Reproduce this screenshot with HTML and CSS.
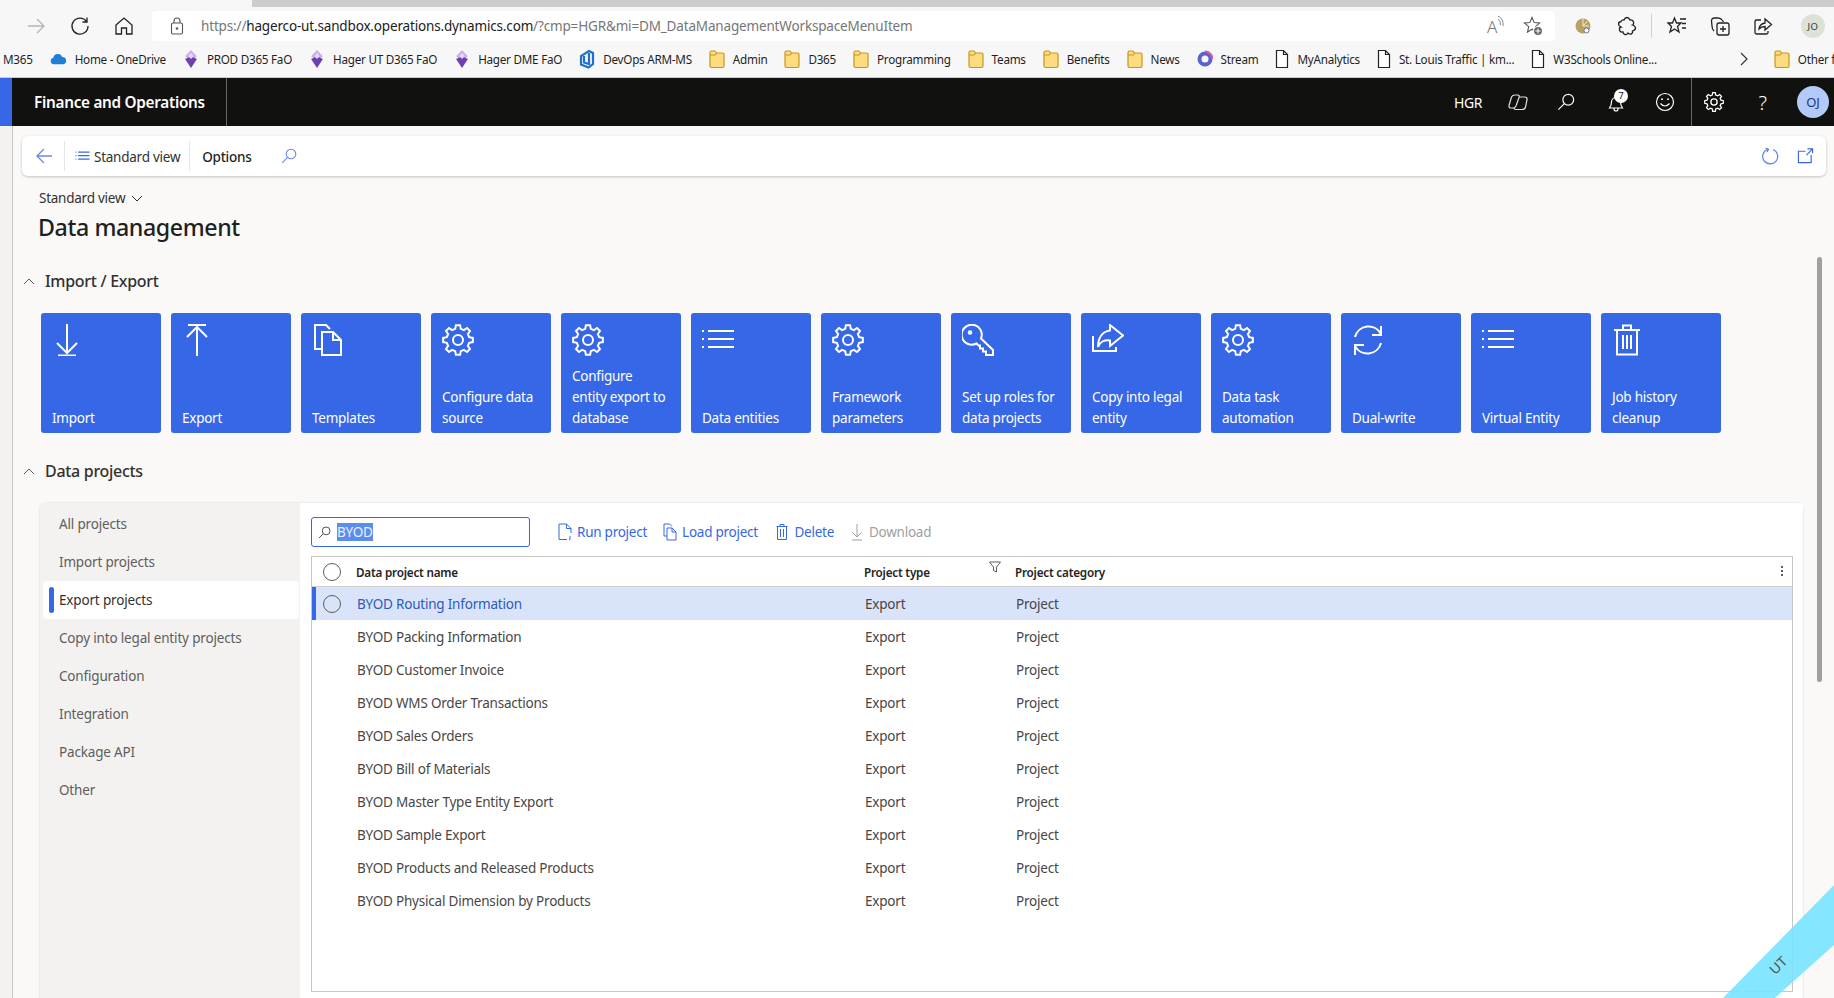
FILE: index.html
```html
<!DOCTYPE html>
<html lang="en">
<head>
<meta charset="utf-8">
<title>Data management</title>
<link rel="stylesheet" href="styles.css">
</head>
<body>
<svg class="defs" width="0" height="0">
  <symbol id="gear" viewBox="0 0 32 32"><path d="M13.22 4.84L13.91 1.15H18.09L18.78 4.84L21.92 6.14L25.03 4.02L27.98 6.97L25.86 10.08L27.16 13.22L30.85 13.91V18.09L27.16 18.78L25.86 21.92L27.98 25.03L25.03 27.98L21.92 25.86L18.78 27.16L18.09 30.85H13.91L13.22 27.16L10.08 25.86L6.97 27.98L4.02 25.03L6.14 21.92L4.84 18.78L1.15 18.09V13.91L4.84 13.22L6.14 10.08L4.02 6.97L6.97 4.02L10.08 6.14Z"/><circle cx="16" cy="16" r="5"/></symbol>
  <symbol id="list" viewBox="0 0 32 32"><path d="M6 7H32M6 15H32M6 23H32M0 7H2M0 15H2M0 23H2" /></symbol>
  <symbol id="folder" viewBox="0 0 16 20"><path d="M1 3.5a1.5 1.5 0 0 1 1.5-1.5H6l1.5 2H13.5A1.5 1.5 0 0 1 15 5.500V17a1.500 1.500 0 0 1-1.500 1.500H2.500A1.500 1.500 0 0 1 1 17Z" fill="#fcdc7e" stroke="#c8971b" stroke-width="1.200"/><path d="M1 6H6.500L7.500 4" fill="none" stroke="#c8971b" stroke-width="1"/></symbol>
  <symbol id="doc" viewBox="0 0 14 20"><path d="M1.500 1.500H8.500L12.500 5.500V18.500H1.500Z M8.500 1.500V5.500H12.500" fill="#fff" stroke="#222" stroke-width="1.200"/></symbol>
  <symbol id="gem" viewBox="0 0 16 22"><path d="M8 1L14.500 8L8 13L1.500 8Z" fill="#c9aff0"/><path d="M8 8L14.500 11L8 21L1.500 11Z" fill="#6d3fb0"/><path d="M8 4L11 8L8 11L5 8Z" fill="#e5d8fa"/></symbol>
  <symbol id="mag" viewBox="0 0 20 20"><circle cx="12.500" cy="7.500" r="6"/><path d="M8.200 11.800L1.500 18.500"/></symbol>
</svg>

<div class="tabstrip"><div class="tab"></div><div class="tabrest"></div></div>

<div class="toolbar">
  <svg class="tb-ic tb-fwd" viewBox="0 0 20 20"><path d="M2 10H18M11 3L18 10L11 17"/></svg>
  <svg class="tb-ic tb-reload" viewBox="0 0 20 20"><path d="M16.500 5.500A8 8 0 1 0 18 10M17 1.500V6H12.500"/></svg>
  <svg class="tb-ic tb-home" viewBox="0 0 20 20"><path d="M2 9L10 2L18 9V18H12.500V12H7.500V18H2Z"/></svg>
  <div class="address">
    <svg class="ad-lock" viewBox="0 0 14 20"><rect x="1.500" y="7" width="11" height="11" rx="1.500"/><path d="M4 7V5A3 3 0 0 1 10 5V7"/><circle cx="7" cy="12.500" r=".8"/></svg>
    <span class="url"><span class="url-dim">https://</span>hagerco-ut.sandbox.operations.dynamics.com<span class="url-dim">/?cmp=HGR&amp;mi=DM_DataManagementWorkspaceMenuItem</span></span>
    <span class="read-aloud">A<svg viewBox="0 0 8 12"><path d="M1 1Q7 4 6 11M1 4Q4 6 3.500 10"/></svg></span>
    <svg class="ad-star" viewBox="0 0 20 20"><path d="M9 1.500L11.200 6.600L16.500 7L12.500 10.600L13.500 16L9 13.200L4.500 16L5.700 10.600L1.500 7L6.800 6.600Z"/><circle cx="15" cy="15" r="4.500" class="ad-plus"/><path class="ad-plus-mark" d="M15 12.500V17.500M12.500 15H17.500"/></svg>
  </div>
  <div class="tb-right">
    <svg class="tb-edge" viewBox="0 0 16 20"><circle cx="8" cy="10" r="7.500" fill="#b7a262"/><path d="M8 10V3M8 10L12.500 5M8 10H14" stroke="#f2ecd6" fill="none"/><circle cx="11.500" cy="14.500" r="2.500" fill="#fff" stroke="#777"/></svg>
    <svg class="tb-ic tb-puzzle" viewBox="0 0 20 20"><path d="M7 4Q8 1.500 10 1.500T13 4Q16 3.500 16.500 6T15.500 9Q18.500 10 18.500 12T15.500 15Q16 17.500 14 18T11 17Q10 19 8 18.500T6 16Q3 16.500 2.500 14T4 11Q1.500 10 1.500 8T4 5.500Q5 3.500 7 4Z"/></svg>
    <span class="tb-sep"></span>
    <svg class="tb-ic tb-fav" viewBox="0 0 20 20"><path d="M7.500 2L9.500 7H14L10.500 10.500L12 16L7.500 13L3 16L4.500 10.500L1 7H5.500ZM13 3H19M15 7.500H19M15 12H19"/></svg>
    <svg class="tb-ic tb-coll" viewBox="0 0 20 20"><rect x="7" y="7" width="12" height="12" rx="2"/><path d="M13 10V16M10 13H16M4 15Q2 13 2 10L1.500 5Q1.500 2 4.500 2H8Q11 2 12.500 4.500L13.500 6"/></svg>
    <svg class="tb-ic tb-share" viewBox="0 0 20 20"><path d="M8 4H3.500A1.500 1.500 0 0 0 2 5.500V16.500A1.500 1.500 0 0 0 3.500 18H13.500A1.500 1.500 0 0 0 15 16.500V15M6 13Q6.500 8 12 7V3L18.500 8.500L12 14V10.500Q8.500 10.500 6 13Z"/></svg>
    <span class="tb-avatar">JO</span>
  </div>
</div>

<div class="bookmarks">
  <span class="bm bm-cut">M365</span>
  <span class="bm"><svg class="bm-cloud" viewBox="0 0 18 12"><path d="M4 11.500A3.500 3.500 0 0 1 3.500 4.600A5 5 0 0 1 13 3.800A3.900 3.900 0 0 1 14 11.500Z" fill="#1f7fd6"/></svg>Home - OneDrive</span>
  <span class="bm"><svg class="bm-i" viewBox="0 0 16 22"><use href="#gem"/></svg>PROD D365 FaO</span>
  <span class="bm"><svg class="bm-i" viewBox="0 0 16 22"><use href="#gem"/></svg>Hager UT D365 FaO</span>
  <span class="bm"><svg class="bm-i" viewBox="0 0 16 22"><use href="#gem"/></svg>Hager DME FaO</span>
  <span class="bm"><svg class="bm-i" viewBox="0 0 16 18"><path d="M14 3V14L9.500 17.500L2 14.500V6L10 1Z M5 6V12.500L10 14V3" fill="none" stroke="#1f6fd0" stroke-width="2.200"/></svg>DevOps ARM-MS</span>
  <span class="bm"><svg class="bm-i"><use href="#folder"/></svg>Admin</span>
  <span class="bm"><svg class="bm-i"><use href="#folder"/></svg>D365</span>
  <span class="bm"><svg class="bm-i"><use href="#folder"/></svg>Programming</span>
  <span class="bm"><svg class="bm-i"><use href="#folder"/></svg>Teams</span>
  <span class="bm"><svg class="bm-i"><use href="#folder"/></svg>Benefits</span>
  <span class="bm"><svg class="bm-i"><use href="#folder"/></svg>News</span>
  <span class="bm"><svg class="bm-i" viewBox="0 0 16 16"><circle cx="8" cy="8" r="5.500" fill="none" stroke="#5b63d3" stroke-width="4"/><path d="M8 .5A7.500 7.500 0 0 1 15.500 8" fill="none" stroke="#e0589b" stroke-width="2"/></svg>Stream</span>
  <span class="bm"><svg class="bm-d"><use href="#doc"/></svg>MyAnalytics</span>
  <span class="bm"><svg class="bm-d"><use href="#doc"/></svg>St. Louis Traffic | km...</span>
  <span class="bm"><svg class="bm-d"><use href="#doc"/></svg>W3Schools Online...</span>
  <svg class="bm-more" viewBox="0 0 8 14"><path d="M1 1L7 7L1 13"/></svg>
  <span class="bm-sep"></span>
  <span class="bm bm-other"><svg class="bm-i"><use href="#folder"/></svg>Other favorites</span>
</div>

<header class="appbar">
  <div class="appbar-brand"><span>Finance and Operations</span></div>
  <div class="appbar-tools">
    <span class="company">HGR</span>
    <svg class="ab-ic ab-dyn" viewBox="0 0 20 20"><path d="M3.500 5Q4.500 3 7 3H9.500Q12 3 11 5.500L8 14Q7 16 5 16H3Q.5 16 1 13.500Z"/><path d="M11 5H16.500Q19.500 5 19 8L17.500 15Q17 17.500 14 17.500H8Q6 17.500 6 16"/></svg>
    <svg class="ab-ic ab-mag"><use href="#mag"/></svg>
    <span class="ab-bell">
      <svg class="ab-ic" viewBox="0 0 20 20"><path d="M2.500 16Q4.500 13 4.500 10A4.500 4.500 0 0 1 13.500 10Q13.500 13 15.500 16ZM7 16V17A2 2 0 0 0 11 17V16"/></svg>
      <b class="ab-badge">7</b>
    </span>
    <svg class="ab-ic ab-smile" viewBox="0 0 20 20"><circle cx="10" cy="10" r="8.500"/><path d="M5.500 11.500Q10 16.500 14.500 11.500"/><path class="ab-eyes" d="M7 6.500V8M13 6.500V8"/></svg>
    <span class="ab-sep"></span>
    <svg class="ab-ic ab-gear"><use href="#gear"/></svg>
    <span class="ab-help">?</span>
    <span class="ab-avatar">OJ</span>
  </div>
</header>

<div class="app">
  <div class="railstrip"></div>
  <main class="main">
    <div class="cmdbar">
      <svg class="cb-back" viewBox="0 0 18 18"><path d="M17 9H2M9 2L2 9L9 16"/></svg>
      <span class="cb-sep cb-sep1"></span>
      <svg class="cb-list"><use href="#list"/></svg>
      <span class="cb-view">Standard view</span>
      <span class="cb-sep cb-sep2"></span>
      <span class="cb-options">Options</span>
      <svg class="cb-mag"><use href="#mag"/></svg>
      <span class="cb-spacer"></span>
      <svg class="cb-refresh" viewBox="0 0 18 18"><path d="M7 2.300A7.500 7.500 0 1 0 12 2.500M4.500 1L7.500 2.300L6 5"/></svg>
      <svg class="cb-open" viewBox="0 0 18 18"><path d="M9 4H1.500V16H15V8M11 1.500H16.500V6M16.500 1.500L10 8"/></svg>
    </div>

    <div class="pagehead">
      <div class="viewname">Standard view <svg class="chev-d" viewBox="0 0 12 7"><path d="M1 1L6 6L11 1"/></svg></div>
      <h1 class="title">Data management</h1>
    </div>

    <h2 class="section s-import"><svg class="chev-u" viewBox="0 0 12 7"><path d="M1 6L6 1L11 6"/></svg>Import / Export</h2>

    <div class="tiles">
      <a class="tile"><svg class="t-ic" viewBox="0 0 32 32"><path d="M15 0V28M5 19L15 29L25 19M6 31.500H24"/></svg><span>Import</span></a>
      <a class="tile"><svg class="t-ic" viewBox="0 0 32 32"><path d="M15 32V4M5 13L15 3L25 13M6 1H24"/></svg><span>Export</span></a>
      <a class="tile"><svg class="t-ic" viewBox="0 0 32 32"><path d="M10 25H3V1H14L18 5M18 1"/><path d="M10 8H21L29 16V31H10Z M21 8V16H29"/></svg><span>Templates</span></a>
      <a class="tile"><svg class="t-ic"><use href="#gear"/></svg><span>Configure data source</span></a>
      <a class="tile"><svg class="t-ic"><use href="#gear"/></svg><span>Configure entity export to database</span></a>
      <a class="tile"><svg class="t-ic"><use href="#list"/></svg><span>Data entities</span></a>
      <a class="tile"><svg class="t-ic"><use href="#gear"/></svg><span>Framework parameters</span></a>
      <a class="tile"><svg class="t-ic" viewBox="0 0 32 32"><path d="M14.500 19.500A10 10 0 1 1 19 14.500L31 26V31H24V27.500H21V24.500H18V21.500H16.500Z"/><circle cx="8" cy="8.500" r="1.300"/></svg><span>Set up roles for data projects</span></a>
      <a class="tile"><svg class="t-ic" viewBox="0 0 32 32"><path d="M1 12V27H24V23"/><path d="M18 1L31 11.500L18 22V16.500C13 15.500 8 17.500 6 23C6 13 11 7.500 18 6.500Z"/></svg><span>Copy into legal entity</span></a>
      <a class="tile"><svg class="t-ic"><use href="#gear"/></svg><span>Data task automation</span></a>
      <a class="tile"><svg class="t-ic" viewBox="0 0 32 32"><path d="M3 13A14 14 0 0 1 29 10M29 2V11H20M29 19A14 14 0 0 1 3 22M3 31V21H12"/></svg><span>Dual-write</span></a>
      <a class="tile"><svg class="t-ic"><use href="#list"/></svg><span>Virtual Entity</span></a>
      <a class="tile"><svg class="t-ic" viewBox="0 0 32 32"><path d="M2 6H28M11 6V1.500H19V6M5 6V30.500H25V6M11 11V25M15 11V25M19 11V25"/></svg><span>Job history cleanup</span></a>
    </div>

    <h2 class="section s-projects"><svg class="chev-u" viewBox="0 0 12 7"><path d="M1 6L6 1L11 6"/></svg>Data projects</h2>

    <section class="panel">
      <nav class="sidenav">
        <a class="nav-item">All projects</a>
        <a class="nav-item">Import projects</a>
        <a class="nav-item active">Export projects</a>
        <a class="nav-item">Copy into legal entity projects</a>
        <a class="nav-item">Configuration</a>
        <a class="nav-item">Integration</a>
        <a class="nav-item">Package API</a>
        <a class="nav-item">Other</a>
      </nav>
      <div class="content">
        <div class="actions">
          <div class="searchbox"><svg class="sb-mag"><use href="#mag"/></svg><span class="sb-text">BYOD</span></div>
          <a class="act act-first"><svg viewBox="0 0 14 18"><path d="M9 16.500H1V1H8.500L13 5.500V10M8.500 1V5.500H13M12 13V16.500H11"/></svg>Run project</a>
          <a class="act"><svg viewBox="0 0 14 18"><path d="M4 13H1V1H6.500L9 3.500M4 5H9L13 9V17H4ZM9 5V9H13"/></svg>Load project</a>
          <a class="act act-del"><svg viewBox="0 0 12 18"><path d="M.5 3.500H11.500M4 3.500V1.500H8V3.500M1.500 3.500V16.500H10.500V3.500M4.500 6V14M7.500 6V14"/></svg>Delete</a>
          <a class="act act-off"><svg viewBox="0 0 12 18"><path d="M6 1V14M1.500 9.500L6 14L10.500 9.500M1 17H11"/></svg>Download</a>
        </div>
        <div class="grid">
          <div class="row head">
            <span class="radio"></span><span class="c-name">Data project name</span><span class="c-type">Project type<svg class="filter" viewBox="0 0 12 12"><path d="M.5 1H11.500L7.500 6V11L4.500 9.500V6Z"/></svg></span><span class="c-cat">Project category</span><span class="c-dots"></span>
          </div>
          <div class="row sel"><span class="radio"></span><span class="c-name">BYOD Routing Information</span><span class="c-type">Export</span><span class="c-cat">Project</span></div>
          <div class="row"><span class="c-blank"></span><span class="c-name">BYOD Packing Information</span><span class="c-type">Export</span><span class="c-cat">Project</span></div>
          <div class="row"><span class="c-blank"></span><span class="c-name">BYOD Customer Invoice</span><span class="c-type">Export</span><span class="c-cat">Project</span></div>
          <div class="row"><span class="c-blank"></span><span class="c-name">BYOD WMS Order Transactions</span><span class="c-type">Export</span><span class="c-cat">Project</span></div>
          <div class="row"><span class="c-blank"></span><span class="c-name">BYOD Sales Orders</span><span class="c-type">Export</span><span class="c-cat">Project</span></div>
          <div class="row"><span class="c-blank"></span><span class="c-name">BYOD Bill of Materials</span><span class="c-type">Export</span><span class="c-cat">Project</span></div>
          <div class="row"><span class="c-blank"></span><span class="c-name">BYOD Master Type Entity Export</span><span class="c-type">Export</span><span class="c-cat">Project</span></div>
          <div class="row"><span class="c-blank"></span><span class="c-name">BYOD Sample Export</span><span class="c-type">Export</span><span class="c-cat">Project</span></div>
          <div class="row"><span class="c-blank"></span><span class="c-name">BYOD Products and Released Products</span><span class="c-type">Export</span><span class="c-cat">Project</span></div>
          <div class="row"><span class="c-blank"></span><span class="c-name">BYOD Physical Dimension by Products</span><span class="c-type">Export</span><span class="c-cat">Project</span></div>
        </div>
      </div>
    </section>
  </main>
</div>

<div class="scrollthumb"></div>
<div class="ribbon"><span>UT</span></div>
</body>
</html>
```
FILE: styles.css
```css
* { box-sizing: border-box; }
html, body { margin: 0; height: 998px; overflow: hidden; }
body { position: relative; background: #faf9f8; color: #323130; font-family: "Noto Sans", "Open Sans", sans-serif; font-size: 13px; letter-spacing: -0.25px; }
svg { flex: none; }
.defs { position: absolute; }
symbol path, symbol circle { vector-effect: non-scaling-stroke; }

/* browser chrome */
.tabstrip { display: flex; height: 7px; }
.tab { width: 252px; background: #f7f7f7; }
.tabrest { flex: 1; background: #cccccc; }
.toolbar { display: flex; align-items: center; height: 38px; background: #f7f7f7; padding-left: 26px; }
.tb-ic { width: 20px; height: 20px; fill: none; stroke: #222; stroke-width: 1.3; }
.tb-fwd { stroke: #b5b5b5; margin-right: 24px; }
.tb-home { margin: 0 18px 0 24px; }
.address { display: flex; align-items: center; width: 1403px; height: 30px; background: #fff; border-radius: 4px; padding-left: 18px; }
.ad-lock { width: 14px; height: 20px; fill: none; stroke: #555; stroke-width: 1.1; margin-right: 17px; }
.url { font-size: 13.500px; color: #1b1b1b; letter-spacing: -0.16px; flex: 1; white-space: nowrap; }
.url-dim { color: #767676; }
.read-aloud { display: flex; font-size: 17px; font-weight: 300; color: #777; width: 36px; letter-spacing: 0; }
.read-aloud svg { width: 8px; height: 12px; fill: none; stroke: #888; }
.ad-star { width: 20px; height: 20px; fill: none; stroke: #555; stroke-width: 1.1; margin-right: 12px; }
.ad-plus { fill: #666; stroke: #fff; }
.ad-plus-mark { stroke: #fff; }
.tb-right { display: flex; align-items: center; flex: 1; padding-left: 20px; }
.tb-edge { width: 16px; height: 20px; margin-right: 26px; }
.tb-puzzle { margin-right: 14px; }
.tb-sep { width: 1px; height: 24px; background: #d0d0d0; margin-right: 15px; }
.tb-fav { margin-right: 23px; }
.tb-coll { margin-right: 23px; }
.tb-share { margin-right: 28px; }
.tb-avatar { display: flex; align-items: center; justify-content: center; width: 24px; height: 24px; border-radius: 50%; background: #dce3d6; color: #333; font-size: 9.500px; letter-spacing: .5px; }

.bookmarks { display: flex; align-items: center; gap: 17px; height: 33px; padding: 0 0 5px 3px; background: #f7f7f7; border-bottom: 1px solid #c9c9c9; overflow: hidden; white-space: nowrap; }
.bm { display: flex; align-items: center; gap: 8px; font-size: 11.700px; color: #1f1f1f; letter-spacing: -0.25px; }
.bm-i { width: 16px; height: 20px; }
.bm-d { width: 14px; height: 20px; }
.bm-cloud { width: 17px; height: 12px; }
.bm-cut { margin-right: 0; }
.bm-more { width: 8px; height: 14px; fill: none; stroke: #333; stroke-width: 1.200; margin-left: 66px; }
.bm-sep { width: 1px; height: 20px; background: #d5d5d5; margin: 0 -7px 0 -1px; }

/* app bar */
.appbar { display: flex; align-items: center; justify-content: space-between; height: 48px; background: #111110; color: #fff; border-left: 12px solid #3667e6; }
.appbar-brand { display: flex; align-items: center; height: 48px; width: 215px; padding-left: 22px; border-right: 1px solid #666; font-size: 15.300px; font-weight: 600; letter-spacing: -0.28px; white-space: nowrap; }
.appbar-tools { display: flex; align-items: center; height: 48px; padding-right: 5px; }
.company { font-size: 14px; margin-right: 26px; letter-spacing: -0.4px; }
.ab-ic { width: 20px; height: 20px; fill: none; stroke: #fff; stroke-width: 1.200; }
.ab-dyn { margin-right: 29px; stroke: #ddd; }
.ab-mag { width: 18px; height: 18px; margin-right: 32px; }
.ab-bell { position: relative; display: flex; margin-right: 28px; }
.ab-badge { position: absolute; top: -3px; right: -1px; width: 14px; height: 14px; border-radius: 50%; background: #fff; color: #111; font-size: 9px; font-weight: 400; text-align: center; line-height: 14px; letter-spacing: 0; }
.ab-smile { margin-right: 16px; }
.ab-eyes { stroke-width: 1.800; }
.ab-sep { width: 1px; height: 48px; background: #666; margin-right: 12px; }
.ab-gear { margin-right: 32.500px; stroke-width: 1.300; }
.ab-help { font-size: 20px; font-weight: 300; width: 12px; margin-right: 28.500px; text-align: center; }
.ab-avatar { display: flex; align-items: center; justify-content: center; width: 32px; height: 32px; border-radius: 50%; background: #b3c9f7; color: #1c3a7a; font-size: 13px; letter-spacing: -0.2px; }

/* app */
.app { display: flex; height: 872px; }
.railstrip { width: 13px; background: #f3f2f1; border-right: 1px solid #c8c6c4; }
.main { flex: 1; min-width: 0; }

.cmdbar { display: flex; align-items: center; height: 40px; margin: 10px 8px 0 9px; background: #fff; border-radius: 6px; box-shadow: 0 1px 3px rgba(0, 0, 0, .22); }
.cb-back { width: 18px; height: 18px; margin-left: 13px; fill: none; stroke: #6f86e8; stroke-width: 1.300; }
.cb-sep { width: 1px; height: 30px; background: #e6e6e6; }
.cb-sep1 { margin-left: 11px; }
.cb-list { width: 17px; height: 14px; margin-left: 9px; fill: none; stroke: #3667e6; stroke-width: 1.300; }
.cb-view { margin-left: 3px; padding-top: 1px; font-size: 13.500px; white-space: nowrap; }
.cb-sep2 { margin-left: 9px; }
.cb-options { margin-left: 12px; padding-top: 1px; font-size: 13.500px; color: #1f1f1f; font-weight: 500; }
.cb-mag { width: 16px; height: 16px; margin-left: 29px; fill: none; stroke: #6f86e8; stroke-width: 1.100; }
.cb-spacer { flex: 1; }
.cb-refresh { width: 18px; height: 20px; fill: none; stroke: #5c83ea; stroke-width: 1.200; margin-right: 18px; }
.cb-open { width: 17px; height: 18px; fill: none; stroke: #3667e6; stroke-width: 1.200; margin-right: 12px; }

.pagehead { padding: 12px 0 0 26px; }
.viewname { display: flex; align-items: center; gap: 6px; height: 20px; font-size: 13.500px; color: #323130; }
.chev-d { width: 12px; height: 7px; fill: none; stroke: #323130; }
.title { margin: 3px 0 0 -1px; font-size: 23.200px; line-height: 32px; font-weight: 500; color: #201f1e; letter-spacing: -0.4px; }

.section { display: flex; align-items: center; height: 24px; margin: 0; padding-left: 10px; font-size: 16px; font-weight: 500; color: #323130; letter-spacing: -0.3px; }
.section svg { width: 12px; height: 7px; fill: none; stroke: #605e5c; margin-right: 10px; }
.s-import { margin-top: 26px; }
.s-projects { margin-top: 26px; }

.tiles { display: flex; gap: 10px; margin: 20px 0 0 28px; }
.tile { position: relative; display: flex; align-items: flex-end; flex: 0 0 120px; height: 120px; padding: 0 13px 4px 11px; background: #3667e6; color: #fff; border-radius: 3px; font-size: 13.500px; line-height: 21px; }
.t-ic { position: absolute; left: 11px; top: 11px; width: 32px; height: 32px; fill: none; stroke: #fff; stroke-width: 2; }

.panel { display: flex; margin: 20px 31px 0 27px; height: 500px; border-radius: 6px 6px 0 0; box-shadow: 0 0 2px rgba(0, 0, 0, .18); }
.sidenav { display: flex; flex-direction: column; width: 260px; padding: 2px 1px 0 3px; background: #f3f2f1; border-radius: 6px 0 0 0; }
.nav-item { position: relative; display: flex; align-items: center; height: 38px; padding-left: 16px; font-size: 13.500px; letter-spacing: -0.17px; color: #605e5c; }
.nav-item.active { background: #fff; color: #323130; border-radius: 3px; }
.nav-item.active::before { content: ""; position: absolute; left: 6px; top: 6px; bottom: 6px; width: 5px; border-radius: 3px; background: #3667e6; }
.content { flex: 1; min-width: 0; background: #fff; padding: 14px 10px 0 11px; }
.actions { display: flex; align-items: center; height: 30px; }
.searchbox { display: flex; align-items: center; width: 219px; height: 30px; padding-left: 6px; border: 1px solid #3667e6; border-radius: 3px; }
.sb-mag { width: 13px; height: 13px; fill: none; stroke: #555; stroke-width: 1; }
.sb-text { margin-left: 6px; padding: 0; background: #5b8def; color: #eaf1ff; font-size: 13.500px; line-height: 18px; }
.act { display: flex; align-items: center; gap: 5px; margin-left: 16px; color: #3667e6; font-size: 13.500px; white-space: nowrap; }
.act-first { margin-left: 28px; }
.act svg { width: 14px; height: 18px; fill: none; stroke: #3667e6; }
.act-del { margin-left: 18.500px; gap: 6px; }
.act-del svg { width: 12px; }
.act-off { margin-left: 17px; gap: 6px; color: #a19f9d; }
.act-off svg { width: 12px; stroke: #a19f9d; }
.grid { position: relative; height: 436px; margin-top: 9px; border: 1px solid #c8c6c4; }
.row { display: grid; grid-template-columns: 45px 508px 151px 1fr; align-items: center; height: 33px; font-size: 13.500px; letter-spacing: -0.21px; color: #484644; }
.row.head { height: 30px; border-bottom: 1px solid #d2d0ce; font-size: 11.700px; font-weight: 600; color: #252423; }
.radio { width: 18px; height: 18px; margin-left: 11px; border: 1px solid #605e5c; border-radius: 50%; background: transparent; }
.row.head .c-name, .row.head .c-type, .row.head .c-cat { margin-left: -1px; }
.c-type { display: flex; justify-content: space-between; padding-right: 15px; }
.filter { width: 12px; height: 12px; fill: none; stroke: #605e5c; margin-top: -3px; }
.c-dots { position: absolute; top: 13px; right: 9px; width: 2px; height: 2px; background: #605e5c; box-shadow: 0 -4px #605e5c, 0 4px #605e5c; }
.row.sel { background: #d9e3fa; box-shadow: inset 4px 0 #3667e6; }
.row.sel .c-name { color: #2f5bb7; }

/* overlays */
.scrollthumb { position: absolute; left: 1817px; top: 257px; width: 5px; height: 425px; background: #a09f9e; border-radius: 3px; }
.ribbon { position: absolute; right: 0; bottom: 0; width: 111px; height: 113px; background: rgba(120, 228, 255, .9); clip-path: polygon(0 113px, 111px 0, 111px 60px, 52px 113px); }
.ribbon span { position: absolute; left: 46px; top: 72px; font-size: 14px; color: #555; letter-spacing: 0; transform: rotate(-45deg); font-family: "Liberation Sans", sans-serif; }
```
